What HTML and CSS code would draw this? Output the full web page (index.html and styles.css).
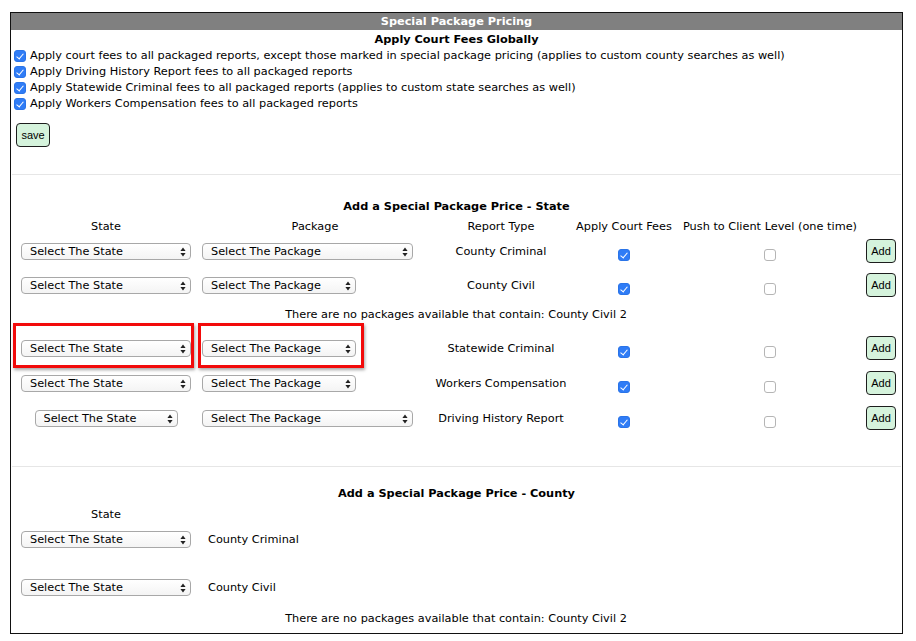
FILE: index.html
```html
<!DOCTYPE html>
<html>
<head>
<meta charset="utf-8">
<link rel="stylesheet" href="styles.css">
</head>
<body>
<div class="panel">
  <div class="panel-head">Special Package Pricing</div>
  <div class="globals">
    <div class="sub-title">Apply Court Fees Globally</div>
    <label class="opt"><input type="checkbox" class="cb" checked>Apply court fees to all packaged reports, except those marked in special package pricing (applies to custom county searches as well)</label>
    <label class="opt"><input type="checkbox" class="cb" checked>Apply Driving History Report fees to all packaged reports</label>
    <label class="opt"><input type="checkbox" class="cb" checked>Apply Statewide Criminal fees to all packaged reports (applies to custom state searches as well)</label>
    <label class="opt"><input type="checkbox" class="cb" checked>Apply Workers Compensation fees to all packaged reports</label>
    <button class="btn save">save</button>
  </div>
  <hr class="sep sep-1">
  <div class="section">
    <div class="sub-title">Add a Special Package Price - State</div>
    <table class="grid state-grid">
      <colgroup>
        <col class="c1"><col class="c2"><col class="c3"><col class="c4"><col class="c5"><col class="c6">
      </colgroup>
      <tr class="head">
        <td>State</td><td>Package</td><td>Report Type</td><td>Apply Court Fees</td><td>Push to Client Level (one time)</td><td></td>
      </tr>
      <tr class="row">
        <td><span class="sel w170"><select><option>Select The State</option></select><svg class="arr" viewBox="0 0 6 10"><path d="M3 0.5L5.6 4H0.4Z M3 9.5L5.6 6H0.4Z"/></svg></span></td>
        <td class="left"><span class="sel w211"><select><option>Select The Package</option></select><svg class="arr" viewBox="0 0 6 10"><path d="M3 0.5L5.6 4H0.4Z M3 9.5L5.6 6H0.4Z"/></svg></span></td>
        <td>County Criminal</td>
        <td><input type="checkbox" class="cb low" checked></td>
        <td><input type="checkbox" class="cb low"></td>
        <td><button class="btn add">Add</button></td>
      </tr>
      <tr class="row">
        <td><span class="sel w170"><select><option>Select The State</option></select><svg class="arr" viewBox="0 0 6 10"><path d="M3 0.5L5.6 4H0.4Z M3 9.5L5.6 6H0.4Z"/></svg></span></td>
        <td class="left"><span class="sel w154"><select><option>Select The Package</option></select><svg class="arr" viewBox="0 0 6 10"><path d="M3 0.5L5.6 4H0.4Z M3 9.5L5.6 6H0.4Z"/></svg></span></td>
        <td>County Civil</td>
        <td><input type="checkbox" class="cb low" checked></td>
        <td><input type="checkbox" class="cb low"></td>
        <td><button class="btn add">Add</button></td>
      </tr>
      <tr class="msg">
        <td colspan="6">There are no packages available that contain: County Civil 2</td>
      </tr>
      <tr class="row">
        <td><span class="sel w170"><select><option>Select The State</option></select><svg class="arr" viewBox="0 0 6 10"><path d="M3 0.5L5.6 4H0.4Z M3 9.5L5.6 6H0.4Z"/></svg></span></td>
        <td class="left"><span class="sel w154"><select><option>Select The Package</option></select><svg class="arr" viewBox="0 0 6 10"><path d="M3 0.5L5.6 4H0.4Z M3 9.5L5.6 6H0.4Z"/></svg></span></td>
        <td>Statewide Criminal</td>
        <td><input type="checkbox" class="cb low" checked></td>
        <td><input type="checkbox" class="cb low"></td>
        <td><button class="btn add">Add</button></td>
      </tr>
      <tr class="row">
        <td><span class="sel w170"><select><option>Select The State</option></select><svg class="arr" viewBox="0 0 6 10"><path d="M3 0.5L5.6 4H0.4Z M3 9.5L5.6 6H0.4Z"/></svg></span></td>
        <td class="left"><span class="sel w154"><select><option>Select The Package</option></select><svg class="arr" viewBox="0 0 6 10"><path d="M3 0.5L5.6 4H0.4Z M3 9.5L5.6 6H0.4Z"/></svg></span></td>
        <td>Workers Compensation</td>
        <td><input type="checkbox" class="cb low" checked></td>
        <td><input type="checkbox" class="cb low"></td>
        <td><button class="btn add">Add</button></td>
      </tr>
      <tr class="row">
        <td><span class="sel w143"><select><option>Select The State</option></select><svg class="arr" viewBox="0 0 6 10"><path d="M3 0.5L5.6 4H0.4Z M3 9.5L5.6 6H0.4Z"/></svg></span></td>
        <td class="left"><span class="sel w211"><select><option>Select The Package</option></select><svg class="arr" viewBox="0 0 6 10"><path d="M3 0.5L5.6 4H0.4Z M3 9.5L5.6 6H0.4Z"/></svg></span></td>
        <td>Driving History Report</td>
        <td><input type="checkbox" class="cb low" checked></td>
        <td><input type="checkbox" class="cb low"></td>
        <td><button class="btn add">Add</button></td>
      </tr>
    </table>
  </div>
  <hr class="sep sep-2">
  <div class="section">
    <div class="sub-title">Add a Special Package Price - County</div>
    <table class="grid county-grid">
      <colgroup><col class="c1"><col></colgroup>
      <tr class="head"><td>State</td><td></td></tr>
      <tr class="crow first">
        <td><span class="sel w170"><select><option>Select The State</option></select><svg class="arr" viewBox="0 0 6 10"><path d="M3 0.5L5.6 4H0.4Z M3 9.5L5.6 6H0.4Z"/></svg></span></td>
        <td class="left">County Criminal</td>
      </tr>
      <tr class="crow second">
        <td><span class="sel w170"><select><option>Select The State</option></select><svg class="arr" viewBox="0 0 6 10"><path d="M3 0.5L5.6 4H0.4Z M3 9.5L5.6 6H0.4Z"/></svg></span></td>
        <td class="left">County Civil</td>
      </tr>
      <tr class="msg cmsg">
        <td colspan="2">There are no packages available that contain: County Civil 2</td>
      </tr>
    </table>
  </div>
  <div class="mark mark-1"></div>
  <div class="mark mark-2"></div>
</div>
</body>
</html>
```
FILE: styles.css
```css
html, body {
  margin: 0;
  padding: 0;
  background: #fff;
}
body {
  font-family: "DejaVu Sans", Verdana, sans-serif;
  font-size: 11.3px;
  line-height: 16px;
  color: #000;
}
.panel {
  position: relative;
  margin: 12px 0 0 10px;
  width: 891px;
  height: 620px;
  border: 1px solid #111;
  overflow: hidden;
}
.panel-head {
  background: #808080;
  color: #fff;
  font-weight: bold;
  text-align: center;
  height: 17px;
  line-height: 17px;
}
.sub-title {
  font-weight: bold;
  text-align: center;
  line-height: 16px;
}
.globals {
  padding: 2px 0 0 2px;
}
.globals .sub-title {
  margin-left: -2px;
}
.opt {
  display: flex;
  align-items: center;
  height: 16px;
}
.cb {
  appearance: none;
  -webkit-appearance: none;
  width: 12px;
  height: 12px;
  margin: 0 4px 0 1px;
  border: 1px solid #b5b5b5;
  border-radius: 3px;
  background: #fff;
  position: relative;
  box-sizing: border-box;
  flex: none;
}
.cb:checked {
  background: #2f7cf6;
  border-color: #2a74e8;
}
.cb:checked::after {
  content: "";
  position: absolute;
  left: 3px;
  top: 1px;
  width: 3px;
  height: 6px;
  border: solid #fff;
  border-width: 0 1.6px 1.6px 0;
  transform: rotate(40deg);
}
.cb.low {
  margin: 6px 0 0 0;
  vertical-align: middle;
}
.btn {
  font-family: "Liberation Sans", Arial, sans-serif;
  font-size: 11px;
  background: #d5f3dc;
  border: 1px solid #1d1d1d;
  border-radius: 4px;
  height: 24px;
  padding: 0;
  color: #000;
}
.save {
  display: block;
  width: 34px;
  margin: 11px 0 0 3px;
}
.add {
  width: 30px;
  margin-top: -1px;
}
.sep {
  border: 0;
  border-top: 1px solid #e6e6e6;
  margin: 0 1px;
  height: 0;
}
.sep-1 {
  margin-top: 27px;
}
.sep-2 {
  margin-top: 30px;
}
.section {
  padding-top: 24px;
}
.sep-2 + .section {
  padding-top: 19px;
}
.grid {
  border-collapse: collapse;
  width: 886px;
  margin-left: 2px;
  table-layout: fixed;
}
.grid td {
  padding: 0;
  text-align: center;
  white-space: nowrap;
}
.grid td.left {
  text-align: left;
  padding-left: 3px;
}
.c1 { width: 186px; }
.c2 { width: 232px; }
.c3 { width: 140px; }
.c4 { width: 106px; }
.c5 { width: 186px; }
.c6 { width: 36px; }
.state-grid {
  margin-top: 4px;
}
.head td {
  height: 16px;
}
.row td {
  height: 35px;
  vertical-align: middle;
}
.state-grid .head + .row td {
  height: 33px;
}
.msg td {
  height: 28px;
  vertical-align: top;
  padding-top: 4px;
  box-sizing: border-box;
}
.county-grid {
  margin-top: 5px;
}
.crow.first td {
  height: 33px;
  vertical-align: middle;
}
.crow.second td {
  height: 40px;
  vertical-align: bottom;
  padding-bottom: 7px;
}
.crow td.left {
  padding-left: 9px;
}
.cmsg td {
  padding-top: 8px;
}
.sel {
  position: relative;
  display: inline-block;
  vertical-align: middle;
  height: 17px;
}
.sel select {
  appearance: none;
  -webkit-appearance: none;
  width: 100%;
  height: 17px;
  margin: 0;
  padding: 0 0 0 8px;
  border: 1px solid #a8a8a8;
  border-radius: 4px;
  background: linear-gradient(#ffffff, #f4f4f4);
  font-family: "DejaVu Sans", Verdana, sans-serif;
  font-size: 11.3px;
  line-height: 15px;
  color: #000;
  box-sizing: border-box;
  display: block;
}
.sel .arr {
  position: absolute;
  right: 5px;
  top: 4px;
  width: 6px;
  height: 10px;
  fill: #222;
  pointer-events: none;
}
.w170 { width: 170px; }
.w143 { width: 143px; }
.w211 { width: 211px; }
.w154 { width: 154px; }
.mark {
  position: absolute;
  border: 3px solid #f20a0a;
  box-shadow: 1px 2px 3px rgba(0, 0, 0, 0.35);
  box-sizing: border-box;
  height: 45px;
  top: 310px;
}
.mark-1 {
  left: 2px;
  width: 181px;
}
.mark-2 {
  left: 187px;
  width: 166px;
}
```
